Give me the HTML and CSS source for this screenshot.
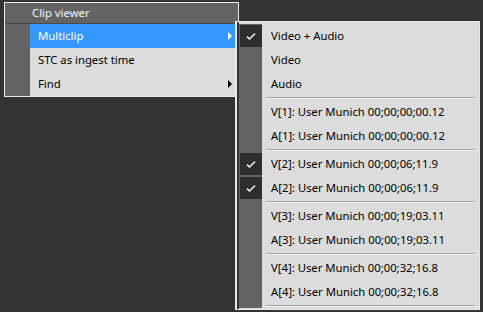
FILE: index.html
```html
<!DOCTYPE html>
<html lang="en">
<head>
    <meta charset="UTF-8">
    <title>Clip viewer menu</title>
    <link rel="stylesheet" href="styles.css">
</head>
<body>
    <div class="menu">
        <div class="menu-title">Clip viewer</div>
        <ul class="menu-list">
            <li class="item active"><span class="gutter"></span><span class="label">Multiclip</span><span class="arrow"></span></li>
            <li class="item"><span class="gutter"></span><span class="label">STC as ingest time</span></li>
            <li class="item"><span class="gutter"></span><span class="label">Find</span><span class="arrow"></span></li>
        </ul>
    </div>

    <!-- submenu of Multiclip -->
    <div class="submenu">
        <ul class="sub-list">
            <li class="sub-item checked"><span class="check"></span><span class="label">Video + Audio</span></li>
            <li class="sub-item"><span class="check"></span><span class="label">Video</span></li>
            <li class="sub-item"><span class="check"></span><span class="label">Audio</span></li>
            <li class="sep"><span class="check"></span><span class="line"></span></li>
            <li class="sub-item"><span class="check"></span><span class="label">V[1]: User Munich 00;00;00;00.12</span></li>
            <li class="sub-item"><span class="check"></span><span class="label">A[1]: User Munich 00;00;00;00.12</span></li>
            <li class="sep"><span class="check"></span><span class="line"></span></li>
            <li class="sub-item checked"><span class="check"></span><span class="label">V[2]: User Munich 00;00;06;11.9</span></li>
            <li class="sub-item checked"><span class="check"></span><span class="label">A[2]: User Munich 00;00;06;11.9</span></li>
            <li class="sep"><span class="check"></span><span class="line"></span></li>
            <li class="sub-item"><span class="check"></span><span class="label">V[3]: User Munich 00;00;19;03.11</span></li>
            <li class="sub-item"><span class="check"></span><span class="label">A[3]: User Munich 00;00;19;03.11</span></li>
            <li class="sep"><span class="check"></span><span class="line"></span></li>
            <li class="sub-item"><span class="check"></span><span class="label">V[4]: User Munich 00;00;32;16.8</span></li>
            <li class="sub-item"><span class="check"></span><span class="label">A[4]: User Munich 00;00;32;16.8</span></li>
            <li class="sep"><span class="check"></span><span class="line"></span></li>
        </ul>
    </div>
</body>
</html>
```

FILE: styles.css
```css
* {
    margin: 0;
    padding: 0;
    box-sizing: border-box;
}

body {
    background: #333333;
    font-family: 'Noto Sans', 'Liberation Sans', sans-serif;
    font-size: 11.3px;
    color: #000;
    padding: 2px 0 0 4px;
    height: 312px;
    overflow: hidden;
}

ul {
    list-style: none;
}

.menu {
    width: 235px;
    border: 1px solid #e8e8e8;
    background: #dcdcdc;
}

.menu-title {
    height: 21px;
    line-height: 20px;
    background: #646464;
    border-bottom: 1px solid #4a4a4a;
    color: #f4f4f4;
    padding-left: 27px;
}

.item {
    display: flex;
    height: 24px;
    align-items: center;
}

.item .gutter {
    width: 25px;
    height: 100%;
    background: #646464;
}

.item .label {
    flex: 1;
    padding-left: 8px;
    line-height: 24px;
}

.item .arrow {
    width: 0;
    height: 0;
    border-top: 4px solid transparent;
    border-bottom: 4px solid transparent;
    border-left: 4px solid #000;
    margin-right: 6px;
}

.item.active .label {
    color: #fff;
}

.item.active {
    background: linear-gradient(to right, transparent 25px, #3399ff 25px);
}

.item.active .arrow {
    border-left-color: #fff;
}

/* popup over the first menu */
.submenu {
    position: absolute;
    left: 235px;
    top: 21px;
    width: 245px;
    border: 1px solid #e8e8e8;
    border-left-width: 2px;
    background: #dcdcdc;
    box-shadow: inset 2px 0 0 #333;
}

.sub-list {
    padding: 2px 0 1px 2px;
}

.sub-item {
    display: flex;
    height: 24px;
    align-items: center;
}

.check {
    width: 23px;
    height: 100%;
    background: #646464;
    padding: 1px 0 1px 1px;
}

.sub-item.checked .check::before {
    content: "";
    display: block;
    width: 100%;
    height: 100%;
    background: #2d2d2d url("data:image/svg+xml,%3Csvg xmlns='http://www.w3.org/2000/svg' width='10' height='8'%3E%3Cpath d='M1 4.5 L3.5 7 L9 1.5' fill='none' stroke='%23f0f0f0' stroke-width='1.6'/%3E%3C/svg%3E") no-repeat center;
}

.sub-item .label {
    padding-left: 9px;
    line-height: 24px;
}

.sep {
    display: flex;
    height: 4px;
    align-items: center;
}

.sep .line {
    flex: 1;
    height: 2px;
    margin: 0 4px 0 5px;
    border-top: 1px solid #a0a0a0;
    border-bottom: 1px solid #f4f4f4;
}
```
